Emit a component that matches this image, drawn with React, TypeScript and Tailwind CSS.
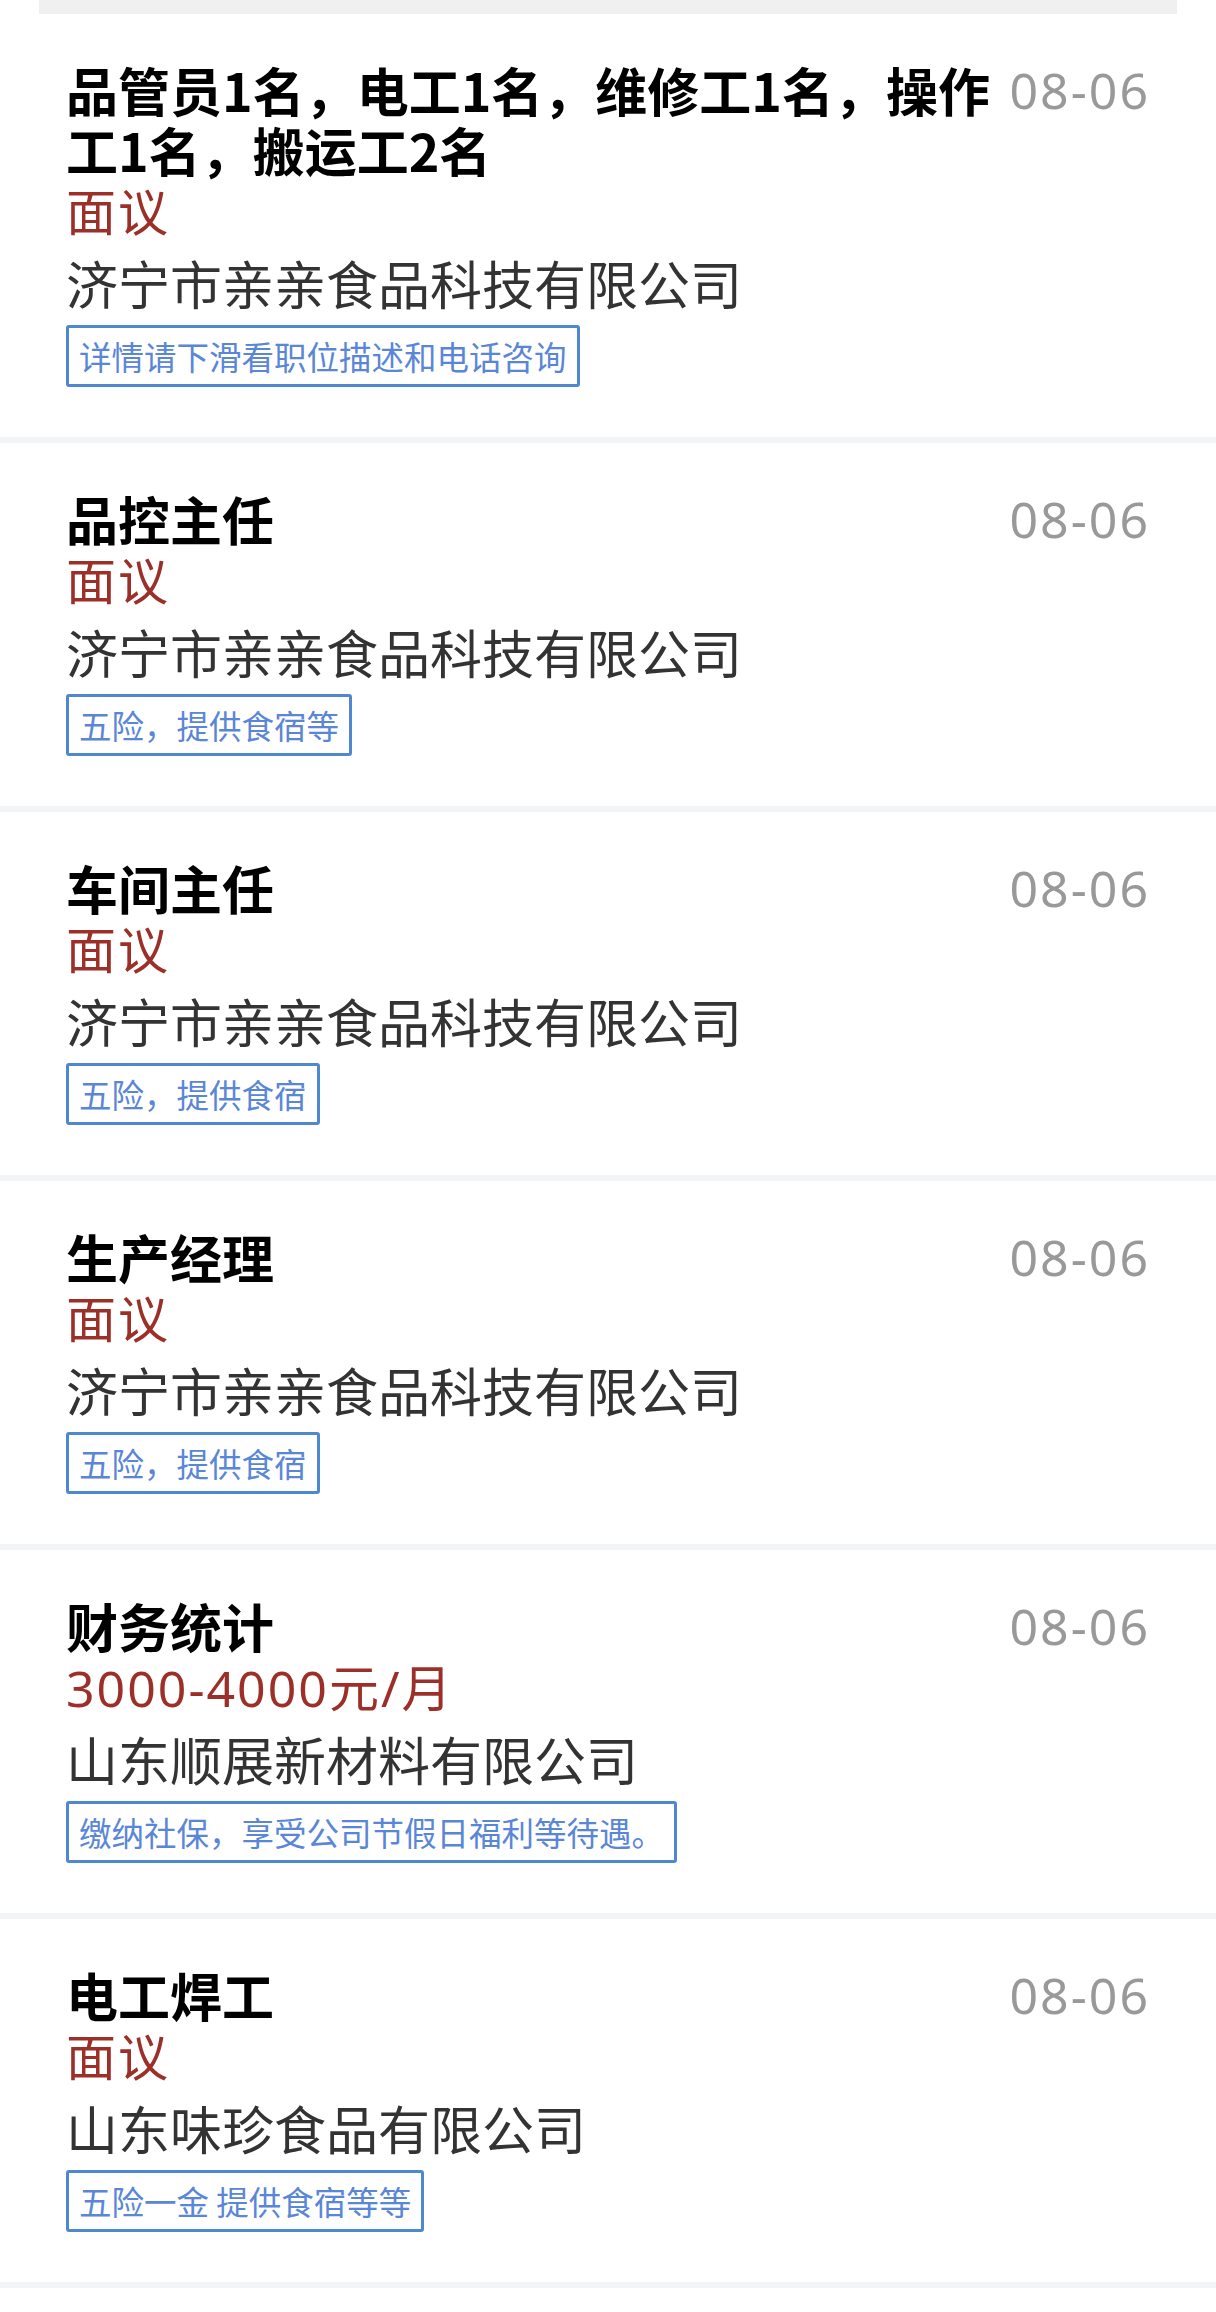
import React from "react";

type Job = {
  title: string;
  salary: string;
  company: string;
  tag: string;
  date: string;
};

const jobs: Job[] = [
  {
    title: "品管员1名，电工1名，维修工1名，操作工1名，搬运工2名",
    salary: "面议",
    company: "济宁市亲亲食品科技有限公司",
    tag: "详情请下滑看职位描述和电话咨询",
    date: "08-06",
  },
  { title: "品控主任", salary: "面议", company: "济宁市亲亲食品科技有限公司", tag: "五险，提供食宿等", date: "08-06" },
  { title: "车间主任", salary: "面议", company: "济宁市亲亲食品科技有限公司", tag: "五险，提供食宿", date: "08-06" },
  { title: "生产经理", salary: "面议", company: "济宁市亲亲食品科技有限公司", tag: "五险，提供食宿", date: "08-06" },
  {
    title: "财务统计",
    salary: "3000-4000元/月",
    company: "山东顺展新材料有限公司",
    tag: "缴纳社保，享受公司节假日福利等待遇。",
    date: "08-06",
  },
  { title: "电工焊工", salary: "面议", company: "山东味珍食品有限公司", tag: "五险一金 提供食宿等等", date: "08-06" },
];

function JobCard({ job }: { job: Job }) {
  return (
    <div className="bg-white px-[66px] pt-[46px] pb-[50px] border-b-[6px] border-[#f3f4f6]">
      <div className="flex items-start gap-4">
        <h3 className="flex-1 text-[52px] leading-[60px] font-bold text-black">{job.title}</h3>
        <span className="text-[50px] leading-[60px] tracking-[2px] text-[#999999] font-['Noto_Sans',sans-serif]">
          {job.date}
        </span>
      </div>
      <div className="text-[50px] leading-[64px] tracking-[2px] text-[#9c3028] font-['Noto_Sans','Noto_Sans_CJK_SC',sans-serif]">
        {job.salary}
      </div>
      <div className="text-[52px] leading-[77px] text-[#333333]">{job.company}</div>
      <div className="mt-[4px] flex">
        <span className="h-[62px] flex items-center px-[10px] border-[3px] border-[#4f87d0] rounded-[3px] text-[32.5px] text-[#5a86d8]">
          {job.tag}
        </span>
      </div>
    </div>
  );
}

export default function App() {
  return (
    <div className="w-[1216px] min-h-[2312px] bg-white font-['Noto_Sans_CJK_SC',sans-serif]">
      <div className="mx-[39px] h-[17px] bg-[#f0f0f0] rounded-b-[3px]" />
      <div className="-mt-[3px]">
        {jobs.map((job, i) => (
          <JobCard key={i} job={job} />
        ))}
      </div>
    </div>
  );
}
